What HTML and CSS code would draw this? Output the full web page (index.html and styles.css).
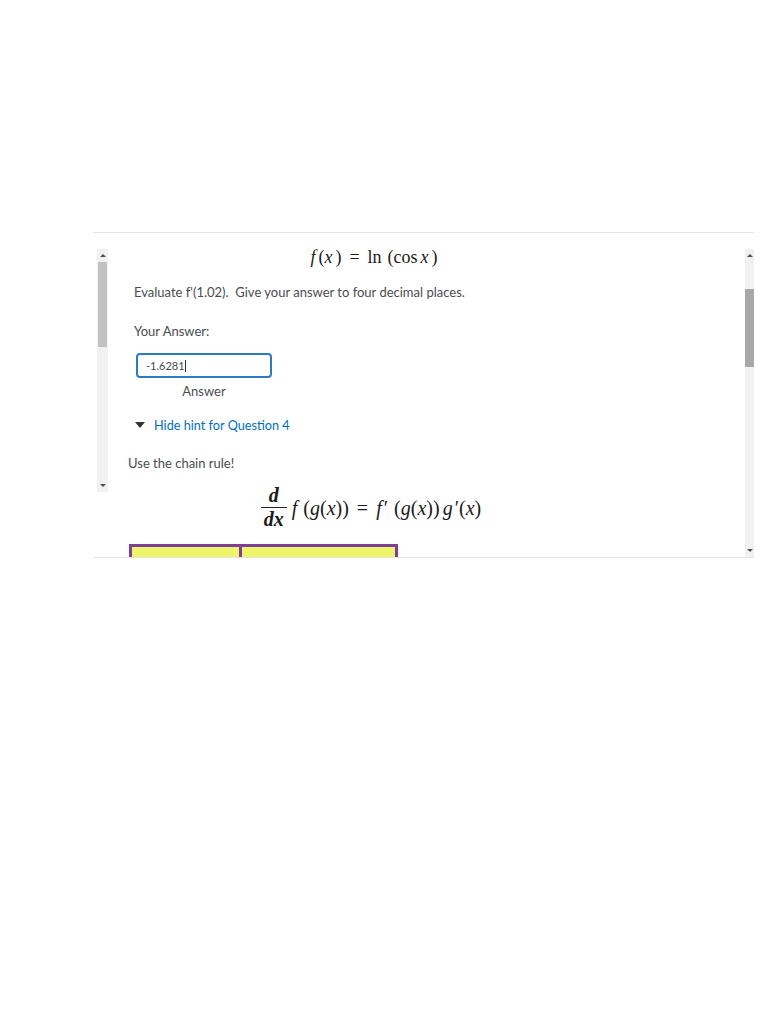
FILE: index.html
```html
<!DOCTYPE html>
<html>
<head>
<meta charset="utf-8">
<link rel="stylesheet" href="styles.css">
</head>
<body>
<div class="page">
  <div class="frame">
    <div class="gutter">
      <div class="sb sb-left">
        <div class="arrow up"></div>
        <div class="thumb thumb-left"></div>
        <div class="spacer"></div>
        <div class="arrow down"></div>
      </div>
    </div>
    <div class="main">
      <div class="col">
        <div class="math m1"><span class="i">f</span><span class="sp">(</span><span class="i">x</span><span class="sp">)</span><span class="rel">=</span>ln<span class="sp2">(</span>cos<span class="i sp">x</span><span class="sp">)</span></div>
        <p class="q">Evaluate f'(1.02).&nbsp; Give your answer to four decimal places.</p>
        <p class="q ya">Your Answer:</p>
        <div class="ans">
          <div class="input">-1.6281<span class="caret"></span></div>
          <div class="ans-label">Answer</div>
        </div>
        <div class="hint"><span class="tri"></span><span class="link">Hide hint for Question 4</span></div>
        <p class="chain">Use the chain rule!</p>
        <div class="math m2">
          <span class="frac"><span class="num">d</span><span class="den">dx</span></span>
          <span class="rhs"><span class="i">f</span><span class="sp2">(</span><span class="i">g</span>(<span class="i">x</span>))<span class="rel">=</span><span class="i">f</span><span class="pr">&#8242;</span><span class="sp2">(</span><span class="i">g</span>(<span class="i">x</span>))<span class="sp1"></span><span class="i">g</span><span class="pr">&#8242;</span>(<span class="i">x</span>)</span>
        </div>
        <div class="table">
          <div class="cell c1"></div>
          <div class="cell c2"></div>
        </div>
      </div>
    </div>
    <div class="sb sb-right">
      <div class="arrow up"></div>
      <div class="thumb thumb-right"></div>
      <div class="spacer"></div>
      <div class="arrow down"></div>
    </div>
  </div>
</div>
</body>
</html>
```
FILE: styles.css
```css
html, body { margin: 0; padding: 0; background: #fff; }
body { font-family: Lato, "Open Sans", sans-serif; color: #494c4e; }
.page { padding-top: 232px; }
.frame {
  margin-left: 93px;
  width: 661px;
  height: 324px;
  border-top: 1px solid #e3e6ea;
  border-bottom: 1px solid #e6e6e6;
  display: flex;
  overflow: hidden;
}
.gutter { padding-left: 4px; padding-top: 16px; width: 11px; flex: none; }
.sb { background: #f1f1f1; display: flex; flex-direction: column; align-items: center; flex: none; }
.sb-left { width: 11px; height: 243px; }
.sb-right { width: 9px; margin-top: 16px; height: 308px; }
.arrow { width: 0; height: 0; border-left: 3px solid transparent; border-right: 3px solid transparent; margin: 5px 0 4px; }
.arrow.up { border-bottom: 3px solid #505050; }
.arrow.down { border-top: 3px solid #505050; margin: 4px 0 5px; }
.thumb { background: #c1c1c1; flex: none; }
.thumb-left { width: 9px; height: 85px; margin-top: 1px; }
.thumb-right { width: 9px; height: 78px; margin-top: 28px; background: #a8a8a8; }
.spacer { flex: 1; }
.main { flex: 1; overflow: hidden; }
.col { margin-left: 20px; width: 490px; }
.math { font-family: "Liberation Serif", "DejaVu Serif", serif; color: #1a1a1a; text-align: center; }
.i { font-style: italic; }
.sp { margin-left: 3px; }
.sp2 { margin-left: 6px; }
.sp1 { margin-left: 3px; }
.pr { margin-left: 2px; }
.rel { margin: 0 8px; }
.m1 { margin-top: 12px; height: 24px; line-height: 24px; font-size: 18px; padding-left: 2px; }
.q { margin: 13px 0 0 6px; font-size: 13px; line-height: 20px; }
.q.ya { margin-top: 19px; }
.ans { display: inline-flex; flex-direction: column; align-items: center; margin: 12px 0 0 8px; }
.input {
  box-sizing: border-box; width: 136px; height: 25px;
  border: 2px solid #2e7bc4; border-radius: 4px;
  font-size: 11px; line-height: 21px; padding-left: 8px; color: #494c4e;
}
.caret { display: inline-block; width: 1px; height: 12px; background: #333; vertical-align: -2px; }
.ans-label { margin-top: 4px; font-size: 13px; line-height: 18px; }
.hint { margin: 15px 0 0 7px; height: 20px; display: flex; align-items: center; font-size: 12.7px; }
.tri { width: 0; height: 0; border-left: 5px solid transparent; border-right: 5px solid transparent; border-top: 6px solid #333; margin-right: 9px; }
.link { color: #006fbf; }
.chain { margin: 18px 0 0 0; font-size: 13px; line-height: 20px; }
.m2 { margin-top: 13px; display: flex; justify-content: center; align-items: center; font-size: 20px; padding-right: 4px; }
.frac { display: inline-flex; flex-direction: column; align-items: center; font-style: italic; font-weight: bold; margin-right: 5px; }
.num { line-height: 19px; padding: 0 3px 2px; }
.den { line-height: 19px; border-top: 1px solid #222; padding: 2px 3px 0; }
.rhs { line-height: 24px; }
.table { margin: 15px 0 0 1px; display: flex; width: 269px; height: 40px; border: 3px solid #7e3f98; box-sizing: border-box; background: #eef56b; }
.cell { height: 100%; }
.c1 { width: 107px; border-right: 3px solid #7e3f98; }
.c2 { flex: 1; }
```
